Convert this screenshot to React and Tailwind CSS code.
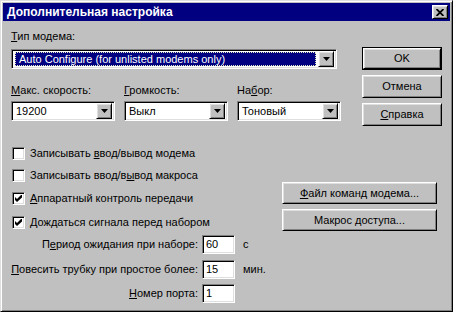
const sunken =
  "border border-t-[#808080] border-l-[#808080] border-b-white border-r-white shadow-[inset_1px_1px_0_#000,inset_-1px_-1px_0_#dfdfdf] bg-white";
const raised =
  "bg-[#c0c0c0] border border-t-white border-l-white border-b-black border-r-black shadow-[inset_1px_1px_0_#dfdfdf,inset_-1px_-1px_0_#808080]";

function Arrow() {
  return (
    <svg width="7" height="4" viewBox="0 0 7 4">
      <polygon points="0,0 7,0 3.5,4" fill="#000" />
    </svg>
  );
}

function DropBtn() {
  return (
    <div className={`${raised} w-[16px] h-[16px] flex items-center justify-center shrink-0`}>
      <Arrow />
    </div>
  );
}

function Combo({ children, width }) {
  return (
    <div className={`${sunken} h-[20px] flex items-center p-[2px] ${width}`}>
      <div className="flex-1 min-w-0 pl-[2px] whitespace-nowrap overflow-hidden">{children}</div>
      <DropBtn />
    </div>
  );
}

function Button({ children, className = "" }) {
  return (
    <div className={`${raised} flex items-center justify-center ${className}`}>
      <span>{children}</span>
    </div>
  );
}

function Check() {
  return (
    <svg width="7" height="7" viewBox="0 0 7 7">
      <polygon points="0,2 2,4 6,0 7,0 7,2.5 2,7 0,5" fill="#000" />
    </svg>
  );
}

function CheckRow({ checked, children, className = "" }) {
  return (
    <div className={`flex items-center h-[13px] ${className}`}>
      <div className={`${sunken} ml-[1px] w-[13px] h-[13px] flex items-center justify-center shrink-0`}>
        {checked && <Check />}
      </div>
      <span className="ml-[5px] whitespace-nowrap">{children}</span>
    </div>
  );
}

function Field({ label, value, unit, className = "" }) {
  return (
    <div className={`flex items-center h-[19px] ${className}`}>
      <div className="w-[187px] flex justify-end whitespace-nowrap">{label}</div>
      <div className={`${sunken} ml-[4px] w-[33px] h-[19px] flex items-center pl-[3px]`}>{value}</div>
      {unit && <span className="ml-[8px]">{unit}</span>}
    </div>
  );
}

export default function App() {
  return (
    <div className="w-[453px] h-[312px] bg-[#c0c0c0] border border-t-[#dfdfdf] border-l-[#dfdfdf] border-b-black border-r-black shadow-[inset_1px_1px_0_#fff,inset_-1px_-1px_0_#808080] p-[2px] font-['Liberation_Sans',Arial,sans-serif] text-[11px] leading-[13px] text-black overflow-hidden">
      {/* Title bar */}
      <div className="h-[18px] bg-[#000080] flex items-center pl-[4px] pr-[2px]">
        <span className="text-white font-bold text-[12px] leading-[14px]">Дополнительная настройка</span>
        <div className={`${raised} ml-auto w-[16px] h-[14px] flex items-center justify-center`}>
          <svg width="8" height="7" viewBox="0 0 8 7">
            <path d="M0.5 0 L7.5 7 M7.5 0 L0.5 7" stroke="#000" strokeWidth="1.8" />
          </svg>
        </div>
      </div>

      {/* Body */}
      <div className="px-[8px]">
        {/* Section A */}
        <div className="flex">
          <div className="w-[351px]">
            <div className="mt-[9px] h-[13px]">
              <u>Т</u>ип модема:
            </div>
            <div className={`${sunken} mt-[6px] w-[326px] h-[20px] flex items-center p-[2px]`}>
              <div className="flex-1 h-[14px] ml-[1px] mr-[2px] bg-[#000080] border border-dotted border-[#e8e8c0] flex items-center text-white pl-[3px] whitespace-nowrap">
                Auto Configure (for unlisted modems only)
              </div>
              <DropBtn />
            </div>
            <div className="mt-[15px] flex gap-[9px]">
              <div className="w-[104px]">
                <div className="h-[13px]">
                  <u>М</u>акс. скорость:
                </div>
                <Combo width="w-[104px] mt-[4px]">19200</Combo>
              </div>
              <div className="w-[104px]">
                <div className="h-[13px]">
                  <u>Г</u>ромкость:
                </div>
                <Combo width="w-[104px] mt-[4px]">Выкл</Combo>
              </div>
              <div className="w-[104px]">
                <div className="h-[13px]">
                  На<u>б</u>ор:
                </div>
                <Combo width="w-[104px] mt-[4px]">Тоновый</Combo>
              </div>
            </div>
          </div>
          <div className="mt-[26px] flex flex-col gap-[5px]">
            <div className="w-[80px] h-[23px] border border-black">
              <Button className="w-full h-full">OK</Button>
            </div>
            <Button className="w-[80px] h-[23px]">Отмена</Button>
            <Button className="w-[80px] h-[23px]">
              <u>С</u>правка
            </Button>
          </div>
        </div>

        {/* Section B */}
        <div className="flex">
          <div className="w-[271px]">
            <CheckRow className="mt-[21px]">
              Записывать <u>в</u>вод/вывод модема
            </CheckRow>
            <CheckRow className="mt-[9px]">
              Записывать ввод/в<u>ы</u>вод макроса
            </CheckRow>
            <CheckRow checked className="mt-[10px]">
              <u>А</u>ппаратный контроль передачи
            </CheckRow>
            <CheckRow checked className="mt-[11px]">
              <u>Д</u>ождаться сигнала перед набором
            </CheckRow>
          </div>
          <div className="mt-[56px] flex flex-col gap-[5px]">
            <Button className="w-[155px] h-[22px]">
              <u>Ф</u>айл команд модема...
            </Button>
            <Button className="w-[155px] h-[22px]">
              Макрос <u>д</u>оступа...
            </Button>
          </div>
        </div>

        {/* Section C */}
        <Field
          className="mt-[4px]"
          label={
            <span>
              П<u>е</u>риод ожидания при наборе:
            </span>
          }
          value="60"
          unit="с"
        />
        <Field
          className="mt-[6px]"
          label={
            <span>
              <u>П</u>овесить трубку при простое более:
            </span>
          }
          value="15"
          unit="мин."
        />
        <Field
          className="mt-[5px]"
          label={
            <span>
              <u>Н</u>омер порта:
            </span>
          }
          value="1"
        />
      </div>
    </div>
  );
}
